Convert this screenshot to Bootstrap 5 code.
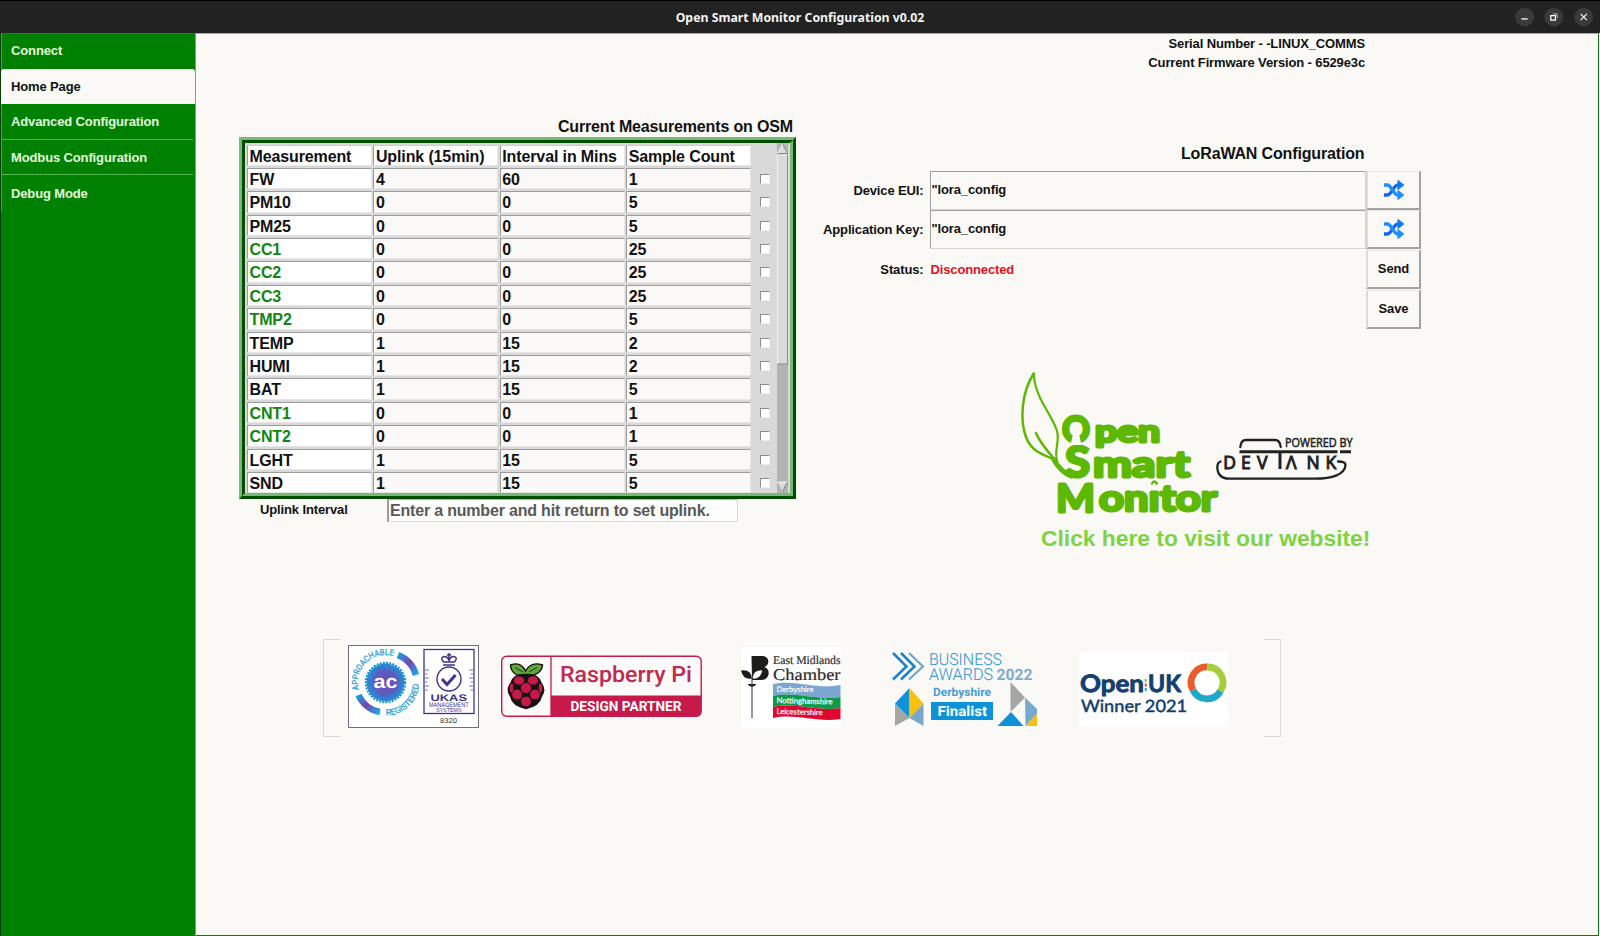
<!DOCTYPE html>
<html lang="en">
<head>
<meta charset="utf-8">
<title>Open Smart Monitor Configuration v0.02</title>
<link href="https://cdn.jsdelivr.net/npm/bootstrap@5.3.0/dist/css/bootstrap.min.css" rel="stylesheet">
<style>
  body { width: 1600px; height: 936px; background: #faf9f6; color: #111; font: bold 13px/19px "Liberation Sans", Arial, sans-serif; letter-spacing: -.13px; overflow: hidden; }
  svg text { white-space: pre; font-weight: normal; letter-spacing: 0; }
  .titlebar { height: 33px; background: #222; border-top: 1px solid #000; color: #f2f2f2; font: bold 12.3px/33px "Noto Sans", sans-serif; letter-spacing: 0; }
  .win-title { left: 0; right: 0; top: 0; }
  .win-buttons { gap: 10px; padding-right: 7px; }
  .side { width: 196px; background: #008000; border-left: 1px solid #033d03; border-right: 1px solid #79a879; }
  .side a { height: 35.6px; padding-left: 9px; color: #e3fbdc; text-decoration: none; display: flex; align-items: center; border-left: 1px solid #52a052; }
  .side a.top { border-top: 1px solid #2c7c2c; height: 35.5px; padding-bottom: 1px; }
  .side a.on { background: #faf9f6; color: #111; border-left-color: #faf9f6; border-radius: 3px 3px 0 0; }
  .side a.ruled { background: linear-gradient(#52b552, #52b552) 0 100%/191px 1px no-repeat; }
  .pane { border-right: 1px solid #1d6b1d; border-bottom: 1px solid #1d6b1d; border-top: 1px solid #8dbb8d; margin-right: 1px; }
  .info { padding-right: 233px; }
  .big { font-size: 16px; line-height: 21px; letter-spacing: -.15px; }
  .measure { width: 557px; margin: 44px 0 0 43px; }
  .measure .big { padding-right: 3px; }
  .ridge { height: 361.5px; border: 3px solid; border-color: #78b878 #004d00 #004d00 #78b878; }
  .ridge > div { height: 100%; border: 3px solid; border-color: #004d00 #78b878 #78b878 #004d00; background: #d9d9d9; overflow: hidden; }
  .cells { width: 532px; padding: .5px 0 0 2px; font-size: 16px; letter-spacing: -.12px; }
  .cells .line { height: 23.4px; display: grid; grid-template-columns: repeat(4, 126.4px) 1fr; }
  .cells .cel { margin: 1px 1.4px 1px 0; padding-left: 1.5px; border: 1px solid; border-color: #9c9c9c #e6e6e6 #e6e6e6 #9c9c9c; line-height: 21px; background: #faf9f7; overflow: hidden; white-space: nowrap; }
  .cells .w { background: #fff; }
  .cells .h { border-top-color: #cfcfcf; }
  .cells .g { color: #128512; }
  .tick { width: 10px; height: 10px; margin: 7px 0 0 7px; background: #fff; border: 1px solid; border-color: #8c8c8c #eee #eee #8c8c8c; }
  .scroller { width: 11px; background: #b3b3b3; }
  .uplink-label { width: 148px; padding: 1px 0 0 21px; }
  .uplink-entry { width: 351px; height: 23px; border: 1px solid; border-color: #b5b5b5 #d9d9d9 #d9d9d9 #9c9c9c; border-left-width: 2px; background: #fdfdfc; color: #595959; font-size: 16px; line-height: 22px; letter-spacing: -.19px; padding-left: 1px; }
  .lora { width: 626px; margin-top: 71px; }
  .lora .big { padding-right: 57.5px; }
  .lora-grid { display: grid; grid-template-columns: 127.5px 436.5px 55px; grid-template-rows: 39px 39.5px 40px 39.5px; column-gap: 6px; margin-top: 7px; align-items: center; }
  .lora-grid > div { padding-bottom: 1px; }
  .entry { height: 38.5px; align-self: start; padding-left: 1px; line-height: 36px; border: 1px solid; border-color: #9f9f9f #d0d0d0 #d4d4d4 #9f9f9f; border-top-width: 1.5px; }
  .keybtn { height: 39px; margin-left: -6px; width: 55px; align-self: start; display: flex; align-items: center; justify-content: center; padding: 0; background: #faf9f6; border: 2px solid; border-color: #e4e4e2 #a2a2a2 #a2a2a2 #dcdcda; border-top-width: 1px; font: inherit; letter-spacing: inherit; color: #111; }
  .red { color: #e0131f; padding-left: 1px; }
  .brand { margin: 42px 0 0 214px; }
  .visit { color: #7dd343; font-size: 22.8px; line-height: 26px; letter-spacing: 0; padding-left: 31px; white-space: nowrap; }
  .awards { margin: 88px 0 0 127px; width: 959px; height: 98px; }
  .brk { width: 17px; height: 98px; border: 1px solid #d9d9d7; }
  svg { display: block; }
</style>
</head>
<body class="d-flex flex-column">
<header class="titlebar position-relative d-flex justify-content-end align-items-center flex-shrink-0">
  <div class="win-title position-absolute text-center">Open Smart Monitor Configuration v0.02</div>
  <div class="win-buttons d-flex position-relative">
    <svg width="19.5" height="20" viewBox="0 0 20 20"><circle cx="10" cy="10" r="9.6" fill="#3a3a3a"/><path d="M6.5 12H13" stroke="#fff" stroke-width="1.3"/></svg>
    <svg width="19.5" height="20" viewBox="0 0 20 20"><circle cx="10" cy="10" r="9.6" fill="#3a3a3a"/><path d="M7 8.500h4.700v4.700h-4.700z" fill="none" stroke="#fff" stroke-width="1.300"/><path d="M9 6.800h4.500v4.500" fill="none" stroke="#bbb"/></svg>
    <svg width="19.5" height="20" viewBox="0 0 20 20"><circle cx="10" cy="10" r="9.6" fill="#3a3a3a"/><path d="M6.800 6.800l6.400 6.400M13.200 6.800l-6.400 6.400" stroke="#eee" stroke-width="1.400"/></svg>
  </div>
</header>
<div class="d-flex flex-grow-1">
  <nav class="side flex-shrink-0">
    <a href="#" class="top">Connect</a>
    <a href="#" class="on">Home Page</a>
    <a href="#" class="ruled">Advanced Configuration</a>
    <a href="#" class="ruled">Modbus Configuration</a>
    <a href="#">Debug Mode</a>
  </nav>
  <main class="pane flex-grow-1">
    <div class="info text-end">
      <div>Serial Number - -LINUX_COMMS</div>
      <div>Current Firmware Version - 6529e3c</div>
    </div>
    <div class="d-flex">
      <section class="measure flex-shrink-0">
        <div class="big text-end">Current Measurements on OSM</div>
        <div class="ridge"><div class="d-flex">
          <div class="cells" id="cells"></div>
          <div class="scroller">
            <svg width="11" height="350" viewBox="0 0 11 350"><rect width="11" height="350" fill="#b3b3b3"/><path d="M5.500 1L10.500 10.500H.5z" fill="#dcdcdc"/><path d="M5.500 1L10.500 10.500H.5" fill="none" stroke="#8c8c8c"/><path d="M5.500 1L.5 10.500" stroke="#f5f5f5"/><rect x=".5" y="12" width="10" height="209" fill="#d9d9d9"/><path d="M.5 221V12H10.500" fill="none" stroke="#f2f2f2"/><path d="M.5 221H10.500V12" fill="none" stroke="#8c8c8c"/><path d="M.5 339H10.500L5.500 348.500z" fill="#dcdcdc"/><path d="M.5 339H10.500" stroke="#f5f5f5"/><path d="M10.500 339L5.500 348.500" stroke="#808080"/></svg>
          </div>
        </div></div>
        <div class="d-flex">
          <div class="uplink-label">Uplink Interval</div>
          <div class="uplink-entry">Enter a number and hit return to set uplink.</div>
        </div>
      </section>
      <section class="lora">
        <div class="big text-end">LoRaWAN Configuration</div>
        <div class="lora-grid">
          <div class="text-end">Device EUI:</div><div class="entry">"lora_config</div>
          <button class="keybtn"><svg width="22" height="22" viewBox="0 0 22 22"><use href="#shuf"/></svg></button>
          <div class="text-end">Application Key:</div><div class="entry">"lora_config</div>
          <button class="keybtn"><svg width="22" height="22" viewBox="0 0 22 22"><g id="shuf"><g fill="none" stroke-width="3.4"><path d="M1 16H4.500C8.500 16 10.500 6 15 6H16" stroke="#1466f0"/><path d="M1 6H4.500C8.500 6 10.500 16 15 16H16" stroke="#1a90ff"/></g><g stroke-width="1.200" stroke-linejoin="round"><path d="M15 1.700L20.500 6L15 10.300z" fill="#0f7af5" stroke="#0f7af5"/><path d="M15 11.700L20.500 16L15 20.300z" fill="#1a90ff" stroke="#1a90ff"/></g></g></svg></button>
          <div class="text-end">Status:</div><div class="red">Disconnected</div>
          <button class="keybtn">Send</button>
          <div></div><div></div><button class="keybtn">Save</button>
        </div>
        <div class="brand">
          <svg width="380" height="154" viewBox="1010 371 380 154">
            <g fill="none" stroke="#5cb800" stroke-linecap="round" stroke-linejoin="round">
              <path d="M1033.700 373.500C1021 393 1020 421 1026 437C1032 453 1045 455 1055 460" stroke-width="2.500"/>
              <path d="M1033.700 373.500C1035 399 1052 414 1057 431C1060 441 1054 450 1057 461" stroke-width="2.200"/>
              <path d="M1036 433C1040 443 1049 453 1056 461" stroke-width="2.500"/>
              <path d="M1054 460Q1061 472 1071 476" stroke-width="5"/>
              <path d="M1152 483.500q2.300-4 4.800 0" stroke-width="2.500"/>
            </g>
            <g fill="#5cb800" stroke="#5cb800" stroke-width="3" stroke-linejoin="round" font-family="Lato, sans-serif" style="--w:bold">
              <text x="1062" y="441.500" font-size="37" style="font-weight:bold" textLength="28" lengthAdjust="spacingAndGlyphs">O</text>
              <text x="1095" y="441.500" font-size="30" style="font-weight:bold" textLength="65" lengthAdjust="spacingAndGlyphs">pen</text>
              <text x="1065" y="477" font-size="42" style="font-weight:bold" textLength="25" lengthAdjust="spacingAndGlyphs">S</text>
              <text x="1093" y="477" font-size="37" style="font-weight:bold" textLength="97" lengthAdjust="spacingAndGlyphs">mart</text>
              <text x="1056" y="511.500" font-size="39" style="font-weight:bold" textLength="39" lengthAdjust="spacingAndGlyphs">M</text>
              <text x="1099" y="511" font-size="36" style="font-weight:bold" textLength="118" lengthAdjust="spacingAndGlyphs">onıtor</text>
            </g>
            <path d="M1070.500 445l2.500-11h6l2.500 11z" fill="#faf9f6"/>
            <g fill="none" stroke="#222" stroke-width="2.300" stroke-linecap="round">
              <path d="M1240.300 447Q1241 440 1246 440H1275Q1280 440 1280.700 447"/>
              <path d="M1220.500 461.500C1216 463 1217 471 1219 474Q1222 478.700 1230 478.700H1313C1333 479 1345 474 1345.500 465Q1345.500 461.500 1338 461.500"/>
            </g>
            <path d="M1239.500 451.700H1337.500M1340 451.700H1351" stroke="#222" stroke-width="3"/>
            <path d="M1280 452V469" stroke="#222" stroke-width="3"/>
            <text y="469" x="1223.300 1241 1257 1286 1306.500 1325.500" font-family="Open Sans, sans-serif" font-size="17.500" fill="#222" stroke="#222" stroke-width="1">DEVΛNK</text>
            <text x="1285" y="447" font-family="Open Sans, sans-serif" font-size="12" textLength="67.500" lengthAdjust="spacingAndGlyphs" fill="#222" stroke="#222" stroke-width=".5">POWERED BY</text>
          </svg>
          <div class="visit">Click here to visit our website!</div>
        </div>
      </section>
    </div>
    <div class="awards d-flex">
      <div class="brk border-end-0"></div>
      <svg width="924" height="98" viewBox="340 639 924 98" text-rendering="geometricPrecision">
        <defs>
          <linearGradient id="acg" x1="0" y1="0" x2="1" y2="1"><stop offset="0" stop-color="#1b9fe0"/><stop offset=".5" stop-color="#7646b0"/><stop offset="1" stop-color="#1ba8e6"/></linearGradient>
          <radialGradient id="acr"><stop offset="0" stop-color="#7a45b5"/><stop offset=".6" stop-color="#5b5cc0"/><stop offset="1" stop-color="#1d93d8"/></radialGradient>
          <path id="arcTop" d="M358.900 689.600A27.500 27.500 0 0 1 397 657.500"/>
          <path id="arcBot" d="M386 715.500A33 33 0 0 0 418.500 677"/>
        </defs>
        <!-- Approachable Registered / UKAS -->
        <rect x="348.500" y="645.500" width="130" height="82" fill="#fff" stroke="#6f6d7a"/>
        <circle cx="385.500" cy="682.500" r="19" fill="url(#acr)"/>
        <circle cx="385.500" cy="682.500" r="19.700" fill="none" stroke="#178fd0" stroke-width="2" stroke-dasharray="2 1.200"/>
        <path d="M398 655A30.500 30.500 0 0 1 416 675" fill="none" stroke="url(#acg)" stroke-width="6.500"/>
        <path d="M358.500 695A29 29 0 0 0 380 712" fill="none" stroke="url(#acg)" stroke-width="6.500"/>
        <text x="373.500" y="688" font-family="Liberation Sans, sans-serif" style="font-weight:bold" font-size="19" fill="#fff" textLength="24" lengthAdjust="spacingAndGlyphs">ac</text>
        <g font-family="Roboto, sans-serif" font-size="8.500" fill="#2a9bd6" stroke="#2a9bd6" stroke-width=".25">
          <text><textPath href="#arcTop" textLength="58" lengthAdjust="spacingAndGlyphs">APPROACHABLE</textPath></text>
          <text><textPath href="#arcBot" textLength="50" lengthAdjust="spacingAndGlyphs">REGISTERED</textPath></text>
        </g>
        <g fill="none" stroke="#40338a">
          <rect x="424" y="649.500" width="50" height="64" stroke-width="1.300"/>
          <path d="M425 670h4M425 674h2.500M425 678h4M425 682h2.500M425 686h4M425 690h2.500M473 670h-4M473 674h-2.500M473 678h-4M473 682h-2.500M473 686h-4M473 690h-2.500" stroke-width=".7"/>
          <circle cx="449" cy="679" r="12" stroke-width="1.400"/>
          <path d="M442 679l5 5.500l8.500-9.500" stroke-width="3"/>
          <path d="M443 665h12M443.500 662q-4-5 1-5.500q3 0 4.500 4q1.500-4 4.500-4q5 .5 1 5.500zM449 653v8M446.800 655h4.400" stroke-width="1.500"/>
        </g>
        <g fill="#40338a" font-family="Liberation Sans, sans-serif">
          <text x="430.500" y="700.500" style="font-weight:bold" font-size="9.500" textLength="36.500" lengthAdjust="spacingAndGlyphs">UKAS</text>
          <text x="429" y="707" font-size="6.500" textLength="39.500" lengthAdjust="spacingAndGlyphs">MANAGEMENT</text>
          <text x="436" y="712" font-size="5.800" textLength="25.500" lengthAdjust="spacingAndGlyphs">SYSTEMS</text>
        </g>
        <text x="440" y="722.800" font-family="Liberation Sans, sans-serif" font-size="7" fill="#333" textLength="17" lengthAdjust="spacingAndGlyphs">8320</text>
        <!-- Raspberry Pi -->
        <rect x="501.700" y="656.300" width="199.500" height="60" rx="5" fill="#fcfbfa" stroke="#c51a4a" stroke-width="1.400"/>
        <path d="M551 656V716" stroke="#c51a4a" stroke-width="1.300"/>
        <path d="M551 695.500H701V711.500Q701 716.500 696 716.500H551z" fill="#c51a4a"/>
        <text x="560" y="682" font-family="Roboto, sans-serif" style="font-weight:500" font-size="22.500" fill="#c02a50" textLength="132" lengthAdjust="spacingAndGlyphs">Raspberry Pi</text>
        <text x="570.500" y="711.300" font-family="Roboto, sans-serif" style="font-weight:bold" font-size="14" fill="#fff" textLength="111" lengthAdjust="spacingAndGlyphs">DESIGN PARTNER</text>
        <g stroke="#171113" stroke-width="1.400">
          <path d="M525.500 675.500C516 677 511 672 510.500 665Q521 661 525.500 671Q531 661 542.500 665C542 672 535 677 525.500 675.500z" fill="#5fa83a"/>
          <path d="M526 708.500C519 707 512 703 510.500 696C507.500 692 508 687 511 683C513 676 519 674 526 674.500C533 674 539 676 541 683C544 687 544.500 692 541.500 696C540 703 533 707 526 708.500z" fill="#171113"/>
          <g fill="#c51a4a" stroke-width=".7"><circle cx="526" cy="688" r="5.500"/><circle cx="517" cy="694.500" r="5.300"/><circle cx="535" cy="694.500" r="5.300"/><circle cx="526" cy="701.500" r="5.300"/><ellipse cx="519" cy="680.500" rx="5.500" ry="4.500"/><ellipse cx="533" cy="680.500" rx="5.500" ry="4.500"/><ellipse cx="511.500" cy="688" rx="2.200" ry="4.800"/><ellipse cx="540.500" cy="688" rx="2.200" ry="4.800"/></g>
          <path d="M515 667.500l8 4.500M537 667.500l-8 4.500" stroke-width=".8"/>
        </g>
        <!-- East Midlands Chamber -->
        <rect x="741" y="647" width="100" height="81" fill="#fff"/>
        <path d="M751.500 656H762C770 656 770 665 764.500 667C771 669 770 680 761 680H752z" fill="#1d1d1b"/>
        <path d="M741 670.500Q751 669 752 678.500Q743 680 741 670.500zM747.500 684Q752 690 756.500 684z" fill="#1d1d1b"/>
        <path d="M752.300 679C752.500 672 757 669.500 762.500 670C762 676 758 679.500 752.300 679z" fill="#fff" stroke="#1d1d1b" stroke-width=".8"/>
        <path d="M752 679V718.500" stroke="#333" stroke-width="1"/>
        <g fill="#2b2b2b" stroke="#2b2b2b" stroke-width=".2" font-family="Liberation Serif, serif">
          <text x="773" y="664" font-size="12" textLength="67.500" lengthAdjust="spacingAndGlyphs">East Midlands</text>
          <text x="773" y="679.500" font-size="16.500" textLength="67.500" lengthAdjust="spacingAndGlyphs">Chamber</text>
        </g>
        <path d="M773 684C795 679 817 690 840.500 685V697C817 701 795 691 773 696z" fill="#7ba6cf"/>
        <path d="M773 696C795 691 817 701 840.500 697V708C817 712 795 702 773 707z" fill="#0d9a48"/>
        <path d="M773 707C795 702 817 712 840.500 708V719C817 723 795 713 773 718z" fill="#e2062e"/>
        <g fill="#fff" stroke="#fff" stroke-width=".2" font-family="Lato, sans-serif" font-size="7.800">
          <text x="776.500" y="692" textLength="37" lengthAdjust="spacingAndGlyphs">Derbyshire</text>
          <text x="776.500" y="703" textLength="56" lengthAdjust="spacingAndGlyphs" transform="rotate(1.500 776 703)">Nottinghamshire</text>
          <text x="776.500" y="714" textLength="46" lengthAdjust="spacingAndGlyphs" transform="rotate(1.500 776 714)">Leicestershire</text>
        </g>
        <!-- Business Awards -->
        <g fill="none">
          <path d="M893 653l13.500 13.500l-13.500 13" stroke="#1583c9" stroke-width="2.500"/>
          <path d="M901 653l13.500 13.500l-13.500 13" stroke="#1583c9" stroke-width="2.500"/>
          <path d="M909 653l14 13.500l-14 13" stroke="#6ba5d3" stroke-width="2.200"/>
        </g>
        <g font-family="Roboto, sans-serif" fill="#2a93d2">
          <text x="929" y="664.800" style="font-weight:300" font-size="16.500" textLength="73" lengthAdjust="spacingAndGlyphs">BUSINESS</text>
          <text x="929" y="679.700" style="font-weight:300" font-size="16.500" textLength="64" lengthAdjust="spacingAndGlyphs">AWARDS</text>
          <text x="996.500" y="679.700" style="font-weight:bold" font-size="15.500" fill="#7fabd0" textLength="36" lengthAdjust="spacingAndGlyphs">2022</text>
          <text x="933" y="696" style="font-weight:bold" font-size="11.500" fill="#4a9bd4" textLength="58" lengthAdjust="spacingAndGlyphs">Derbyshire</text>
        </g>
        <rect x="931" y="702" width="62" height="18" fill="#0d92da"/>
        <text x="937.500" y="715.800" font-family="Roboto, sans-serif" style="font-weight:bold" font-size="14" fill="#fff" textLength="49.500" lengthAdjust="spacingAndGlyphs">Finalist</text>
        <path d="M909.500 688V718L895 703.500z" fill="#0d92da"/><path d="M909.500 688L923.500 703.500L909.500 718z" fill="#fbbf10"/><path d="M895 703.500L909.500 718L895 726z" fill="#a5a5a5"/><path d="M923.500 703.500V726L909.500 718z" fill="#78a9cc"/>
        <path d="M1010.500 682L1025 697.500L1010.500 712z" fill="#a5a5a5"/><path d="M1011 712L1023.500 726H997.500z" fill="#0d92da"/><path d="M1025 697.500L1037 709V714L1025.500 726z" fill="#78a9cc"/><path d="M1037 714V726H1025.500z" fill="#fbbf10"/>
        <!-- OpenUK -->
        <rect x="1079.500" y="652" width="149" height="74.500" fill="#fff"/>
        <g font-family="Lato, sans-serif" fill="#14406f">
          <text x="1080" y="691.500" style="font-weight:bold" stroke="#14406f" stroke-width=".9" font-size="24" textLength="64" lengthAdjust="spacingAndGlyphs">Open</text>
          <text x="1148" y="691.500" style="font-weight:bold" stroke="#14406f" stroke-width=".9" font-size="24" textLength="33" lengthAdjust="spacingAndGlyphs">UK</text>
          <text x="1081" y="712" stroke="#14406f" stroke-width=".5" font-size="17" textLength="106" lengthAdjust="spacingAndGlyphs">Winner 2021</text>
        </g>
        <path d="M1145.700 679v3" stroke="#8cc63f" stroke-width="2"/><path d="M1145.700 683.500v3" stroke="#e8512a" stroke-width="2"/><path d="M1145.700 688v3" stroke="#1fa5c8" stroke-width="2"/>
        <g fill="none" stroke-width="6.800">
          <path d="M1193 690A15.500 15.500 0 0 1 1207.500 667" stroke="#ea5c2d"/>
          <path d="M1207.500 667A15.500 15.500 0 0 1 1220.500 691" stroke="#a4cf3a"/>
          <path d="M1220.500 691A15.500 15.500 0 0 1 1193 690" stroke="#21a7c6"/>
        </g>
      </svg>
      <div class="brk border-start-0"></div>
    </div>
  </main>
</div>
<script>
  const rows = [['FW',4,60,1],['PM10',0,0,5],['PM25',0,0,5],['CC1',0,0,25,1],['CC2',0,0,25,1],['CC3',0,0,25,1],['TMP2',0,0,5,1],['TEMP',1,15,2],['HUMI',1,15,2],['BAT',1,15,5],['CNT1',0,0,1,1],['CNT2',0,0,1,1],['LGHT',1,15,5],['SND',1,15,5]];
  const head = ['Measurement','Uplink (15min)','Interval in Mins','Sample Count'].map(t => `<div class="cel w h">${t}</div>`).join('');
  document.getElementById('cells').innerHTML = `<div class="line">${head}</div>` + rows.map(r =>
    `<div class="line"><div class="cel w${r[4] ? ' g' : ''}">${r[0]}</div><div class="cel">${r[1]}</div><div class="cel">${r[2]}</div><div class="cel">${r[3]}</div><div class="tick"></div></div>`).join('');
</script>
<script src="https://cdn.jsdelivr.net/npm/bootstrap@5.3.0/dist/js/bootstrap.bundle.min.js"></script>
</body>
</html>
